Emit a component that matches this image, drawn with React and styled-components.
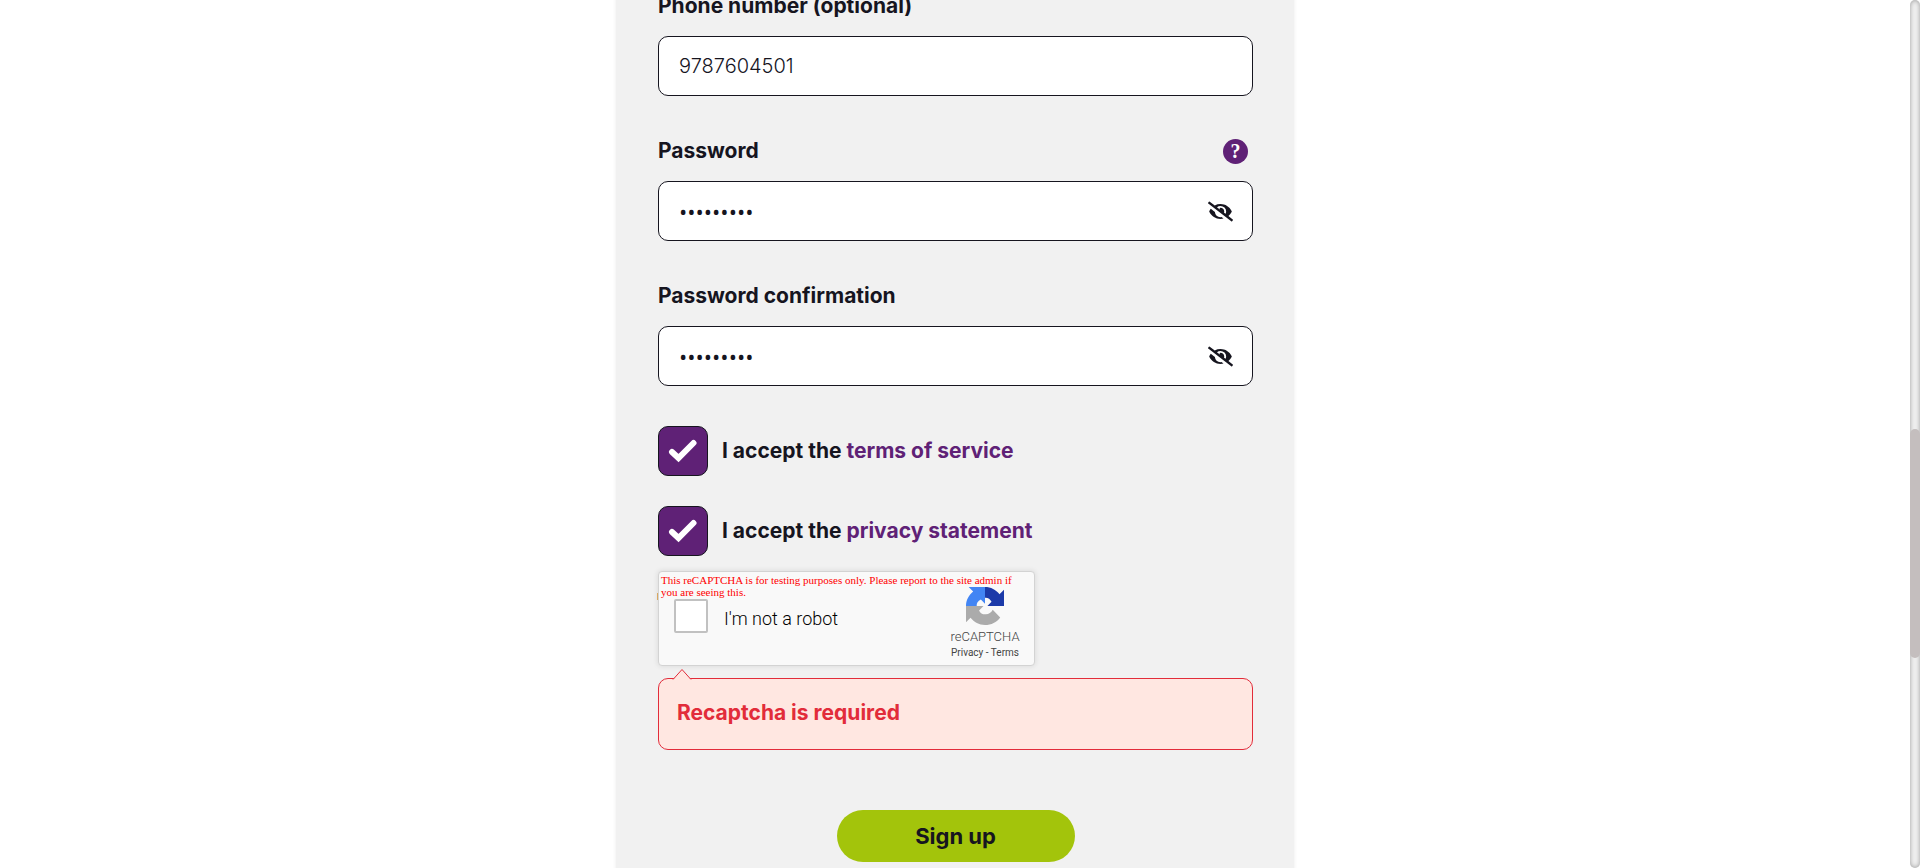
import React, { useState } from "react";
import styled, { createGlobalStyle } from "styled-components";
import { FaEyeSlash } from "react-icons/fa";

const ink = "#16151f";
const purple = "#5f2176";
const red = "#e22c3a";

const GlobalStyle = createGlobalStyle`
  *, *::before, *::after { box-sizing: border-box; }
  body {
    margin: 0;
    background: #fff;
    color: ${ink};
    font-family: Inter, "Liberation Sans", sans-serif;
    font-size: 21px;
    line-height: 30px;
  }
`;

const Page = styled.div`
  display: grid;
  grid-template-columns: minmax(0, 1fr) 10px;
  height: 100vh;
  overflow: hidden;
`;

const Main = styled.main`
  display: flex;
  flex-direction: column;
  align-items: center;
  overflow: hidden;
`;

/* The form is scrolled so that its first label is partly out of view. */
const Panel = styled.form`
  display: flex;
  flex-direction: column;
  flex: 1 0 auto;
  width: 100%;
  max-width: 678px;
  margin-top: -9px;
  padding: 0 41px 40px 42px;
  background: #f1f1f1;
  box-shadow: 0 0 4px rgba(0, 0, 0, 0.08);
`;

const Field = styled.div`
  display: flex;
  flex-direction: column;
  gap: 15px;
  margin-bottom: 40px;
`;

const LabelRow = styled.div`
  display: flex;
  align-items: center;
  justify-content: space-between;
  height: 30px;
  padding-right: 5px;
`;

const Label = styled.label`
  font-weight: 700;
`;

const HelpButton = styled.button`
  width: 25px;
  height: 25px;
  padding: 0;
  border: 0;
  border-radius: 50%;
  background: ${purple};
  color: #fff;
  font: 700 20px/24px "Liberation Serif", serif;
  cursor: pointer;
`;

const InputBox = styled.div`
  display: flex;
  align-items: center;
  height: 60px;
  padding: 0 19px 0 20px;
  border: 1px solid ${ink};
  border-radius: 10px;
  background: #fff;
`;

const Input = styled.input`
  flex: 1;
  min-width: 0;
  padding: 0;
  border: 0;
  outline: 0;
  background: transparent;
  color: ${ink};
  font: 300 20px/30px Inter, "Liberation Sans", sans-serif;

  &[type="password"] {
    font: 400 22px/30px "Open Sans", sans-serif;
  }
`;

const IconButton = styled.button`
  display: flex;
  padding: 0;
  border: 0;
  background: none;
  color: ${ink};
  cursor: pointer;
`;

const Consents = styled.div`
  display: flex;
  flex-direction: column;
  gap: 30px;
  margin-bottom: 15px;
`;

const Consent = styled.div`
  display: flex;
  align-items: center;
  gap: 14px;
`;

const Tick = styled.span`
  display: grid;
  width: 50px;
  height: 50px;

  > * { grid-area: 1 / 1; }
  svg { pointer-events: none; place-self: center; }
`;

const TickInput = styled.input`
  appearance: none;
  width: 50px;
  height: 50px;
  margin: 0;
  border: 1px solid ${ink};
  border-radius: 10px;
  background: #fff;
  &:checked { background: ${purple}; }
`;

const Link = styled.a`
  color: ${purple};
  text-decoration: none;
`;

const Captcha = styled.div`
  position: relative;
  display: flex;
  align-items: center;
  width: 377px;
  max-width: 100%;
  height: 95px;
  padding: 0 13px 0 15px;
  border: 1px solid #d3d3d3;
  border-radius: 4px;
  background: #f9f9f9;
  box-shadow: 0 0 5px 1px rgba(0, 0, 0, 0.08);
  font-family: Roboto, sans-serif;

  &::before {
    content: "";
    position: absolute;
    top: 21px;
    left: -2px;
    width: 1px;
    height: 7px;
    background: #d9a860;
  }
`;

const CaptchaNotice = styled.p`
  position: absolute;
  inset: 2px 8px auto 2px;
  margin: 0;
  color: #f00;
  font: 11px/12px "Liberation Serif", serif;
`;

const CaptchaInput = styled.input`
  appearance: none;
  align-self: flex-start;
  width: 34px;
  height: 34px;
  margin: 27px 0 0;
  border: 2px solid #c1c1c1;
  border-radius: 2px;
  background: #fff;
`;

const CaptchaLabel = styled.label`
  flex: 1;
  margin-left: 16px;
  color: #000;
  font-size: 18px;
  font-weight: 300;
  line-height: 20px;
`;

const CaptchaBrand = styled.div`
  display: flex;
  flex-direction: column;
  align-items: center;
  width: 72px;
  padding-top: 9px;
  color: #444;
`;

const BrandName = styled.span`
  margin-top: 3px;
  font-size: 13px;
  font-weight: 300;
  line-height: 18px;
`;

const BrandLinks = styled.span`
  font-size: 10px;
  line-height: 14px;
  white-space: nowrap;
  a { color: inherit; text-decoration: none; }
`;

const ErrorBox = styled.div`
  position: relative;
  margin-top: 12px;
  padding: 19px 18px 21px;
  border: 1px solid ${red};
  border-radius: 10px;
  background: #ffe7e1;
  color: ${red};
  font-weight: 700;
`;

const Pointer = styled.svg`
  position: absolute;
  top: -11px;
  left: 13px;
`;

const Submit = styled.button`
  align-self: center;
  width: 238px;
  height: 52px;
  margin-top: 60px;
  border: 0;
  border-radius: 26px;
  background: #a3c40b;
  color: ${ink};
  font: 700 22px/30px Inter, "Liberation Sans", sans-serif;
  cursor: pointer;
`;

const Track = styled.div`
  display: grid;
  grid-template-rows: 429fr 229fr 210fr;
  border-radius: 5px;
  background: #f1f1f1;
  box-shadow: inset 0 0 5px #999;
`;

const Thumb = styled.div`
  grid-row: 2;
  border-radius: 5px;
  background: #c4bebe;
`;

function CaptchaLogo() {
  return (
    <svg width="38" height="38" viewBox="0 0 64 64" aria-hidden="true">
      <path fill="#1c3aa9" d="M64 32V4.500l-7.600 7.600C50.200 4.500 42 0 32 0v18c4.500-.5 9 2 11 7l-7 7z" />
      <path fill="#4285f4" d="M32 0H4.500l7.600 7.600C4.500 13.800 0 22 0 32h18c-.5-4.500 2-9 7-11l7 7z" />
      <path fill="#ababab" d="M0 32v27.500l7.600-7.600C13.800 59.500 22 64 32 64c10.500 0 19.800-5 25.600-12.800L45 38.500C42 44 38 46.500 32 46c-4.500 0-8-2-10-6.500l7.500-7.500z" />
    </svg>
  );
}

function PasswordField({ id, label, help }) {
  const [visible, setVisible] = useState(false);
  return (
    <Field>
      <LabelRow>
        <Label htmlFor={id}>{label}</Label>
        {help && <HelpButton type="button" aria-label="Password help">?</HelpButton>}
      </LabelRow>
      <InputBox>
        <Input id={id} type={visible ? "text" : "password"} defaultValue="Secret123" />
        <IconButton type="button" aria-label="Show or hide password" onClick={() => setVisible(!visible)}>
          <FaEyeSlash size={25} aria-hidden="true" />
        </IconButton>
      </InputBox>
    </Field>
  );
}

function ConsentRow({ id, link }) {
  return (
    <Consent>
      <Tick>
        <TickInput id={id} type="checkbox" defaultChecked />
        <svg width="30" height="24" viewBox="0 0 30 24" fill="none" stroke="#fff" strokeWidth="6" strokeLinecap="round" strokeLinejoin="miter" aria-hidden="true">
          <path d="M4 13 L10.500 19 L25.500 4" />
        </svg>
      </Tick>
      <Label htmlFor={id}>
        I accept the <Link href="#">{link}</Link>
      </Label>
    </Consent>
  );
}

export default function App() {
  return (
    <>
      <GlobalStyle />
      <Page>
        <Main>
          <Panel onSubmit={(e) => e.preventDefault()}>
            <Field>
              <LabelRow>
                <Label htmlFor="phone">Phone number (optional)</Label>
              </LabelRow>
              <InputBox>
                <Input id="phone" type="tel" defaultValue="9787604501" />
              </InputBox>
            </Field>
            <PasswordField id="password" label="Password" help />
            <PasswordField id="confirmation" label="Password confirmation" />
            <Consents>
              <ConsentRow id="terms" link="terms of service" />
              <ConsentRow id="privacy" link="privacy statement" />
            </Consents>
            <Captcha>
              <CaptchaInput id="robot" type="checkbox" />
              <CaptchaLabel htmlFor="robot">I'm not a robot</CaptchaLabel>
              <CaptchaBrand>
                <CaptchaLogo />
                <BrandName>reCAPTCHA</BrandName>
                <BrandLinks>
                  <a href="#">Privacy</a> - <a href="#">Terms</a>
                </BrandLinks>
              </CaptchaBrand>
              <CaptchaNotice>
                This reCAPTCHA is for testing purposes only. Please report to the site admin if you are seeing this.
              </CaptchaNotice>
            </Captcha>
            <ErrorBox role="alert">
              <Pointer width="20" height="12" viewBox="0 0 20 12" aria-hidden="true">
                <path d="M1 11.500 L10 1.500 L19 11.500" fill="#ffe7e1" stroke={red} />
              </Pointer>
              Recaptcha is required
            </ErrorBox>
            <Submit type="submit">Sign up</Submit>
          </Panel>
        </Main>
        <Track>
          <Thumb />
        </Track>
      </Page>
    </>
  );
}
